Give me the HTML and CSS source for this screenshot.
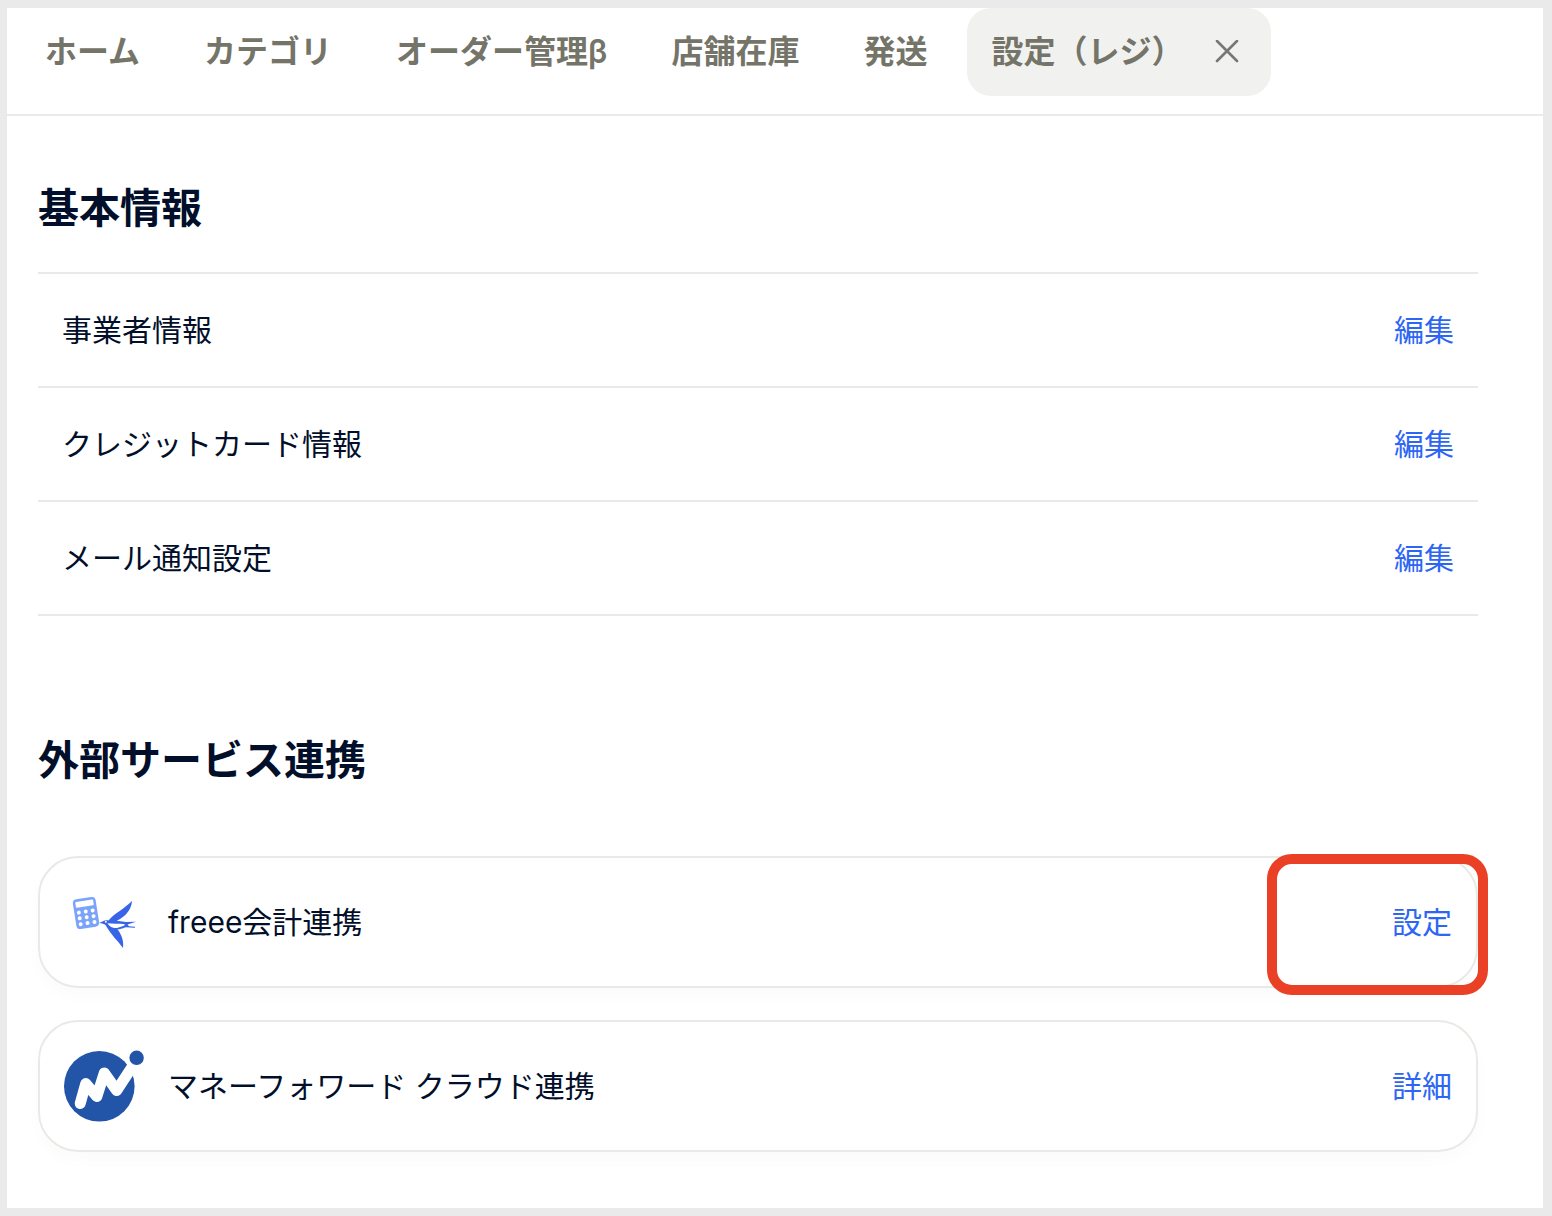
FILE: index.html
```
<!DOCTYPE html>
<html lang="ja">
<head>
  <meta charset="UTF-8" />
  <meta name="viewport" content="width=device-width, initial-scale=1.0" />
  <title>設定（レジ）</title>
  <link rel="stylesheet" href="styles.css">
</head>
<body>
  <div class="page">
    <nav class="tabs">
      <a class="tab" href="#home">ホーム</a>
      <a class="tab" href="#category">カテゴリ</a>
      <a class="tab" href="#orders">オーダー管理β</a>
      <a class="tab" href="#stock">店舗在庫</a>
      <a class="tab" href="#shipping">発送</a>
      <div class="tab active">
        <a href="#settings">設定（レジ）</a>
        <button class="close" type="button" aria-label="閉じる">
          <svg width="24" height="24" viewBox="0 0 24 24" fill="none" stroke="#777" stroke-width="2.6" stroke-linecap="round">
            <path d="M2 1L22 21M22 1L2 21" />
          </svg>
        </button>
      </div>
    </nav>

    <main>
      <section id="settings">
        <h2>基本情報</h2>
        <ul class="rows">
          <li><span>事業者情報</span><a href="#business">編集</a></li>
          <li><span>クレジットカード情報</span><a href="#card">編集</a></li>
          <li><span>メール通知設定</span><a href="#mail">編集</a></li>
        </ul>
      </section>

      <section class="services">
        <h2>外部サービス連携</h2>
        <div class="card marked">
          <svg class="logo" viewBox="0 0 80 80">
            <!-- calculator -->
            <g transform="rotate(-9 22 31)">
              <rect x="10.500" y="16" width="23" height="30" rx="4" fill="#7ba3fa" />
              <rect x="13" y="18.500" width="18" height="6" rx="1" fill="#fff" />
              <g fill="#fff">
                <circle cx="15" cy="29.500" r="2" /><circle cx="22" cy="29.500" r="2" /><circle cx="29" cy="29.500" r="2" />
                <circle cx="15" cy="35.300" r="2" /><circle cx="22" cy="35.300" r="2" /><circle cx="29" cy="35.300" r="2" />
                <circle cx="15" cy="41.200" r="2" /><circle cx="22" cy="41.200" r="2" /><circle cx="29" cy="41.200" r="2" />
              </g>
            </g>
            <!-- swallow -->
            <g fill="#3864e8">
              <path d="M35 41L39 39.300C41 38 43 38 44.500 38.400C51 31 60 27 68 19C67.500 28 61 35 52.700 38.700L62 40L72 39.700L63.500 42.500L65 44.300L71 44.800V45.700L61.500 45.200C58 46.500 56 47.300 53.500 47.300C57 52 60 58 59 66C54 59 47 53 41.500 43C40 42 38 41.300 35 41Z" />
              <path d="M43.300 41.300C46.500 45.500 49.500 46.500 53 45.900L60 43.700L61 42.200C54 41.500 49 41.800 43.300 41.300Z" fill="#fff" />
              <circle cx="41.800" cy="39.800" r="1" fill="#fff" />
            </g>
          </svg>
          <span class="name">freee会計連携</span>
          <a href="#freee">設定</a>
        </div>
        <div class="card">
          <svg class="logo" viewBox="0 0 80 80">
            <circle cx="35.300" cy="40.300" r="35.300" fill="#2254a8" />
            <path d="M16.200 57.500L21.800 37.500L32.800 50.500L40.300 27L52.700 44.500L70 18" fill="none" stroke="#fff" stroke-width="11" stroke-linecap="round" stroke-linejoin="round" />
            <circle cx="72.600" cy="11.800" r="10.500" fill="#fff" />
            <circle cx="72.600" cy="11.800" r="7.200" fill="#2254a8" />
          </svg>
          <span class="name">マネーフォワード クラウド連携</span>
          <a href="#moneyforward">詳細</a>
        </div>
      </section>
    </main>
  </div>
</body>
</html>
```
FILE: styles.css
```
* {
  box-sizing: border-box;
}
body {
  margin: 0;
  padding: 8px 9px 8px 7px;
  background: #eaeaea;
  color: #020f2a;
  font-family: Inter, "Noto Sans CJK JP", sans-serif;
  font-size: 30px;
  font-weight: 400;
  line-height: 48px;
}
a {
  color: #2d66f5;
  text-decoration: none;
}
.page {
  background: #fff;
}
.tabs {
  display: flex;
  gap: 16px;
  padding: 0 14px 18px;
  border-bottom: 2px solid #eaeaea;
  font-size: 32px;
  font-weight: 600;
  white-space: nowrap;
}
.tab {
  padding: 20px 24px;
  color: #747469;
}
.tab a {
  color: inherit;
}
.tab.active {
  display: flex;
  align-items: center;
  gap: 32px;
  padding-right: 32px;
  border-radius: 24px;
  background: #f1f1ef;
}
.close {
  display: flex;
  padding: 0;
  border: none;
  background: none;
  cursor: pointer;
}
main {
  padding: 64px 65px 56px 31px;
}
h2 {
  margin: 0;
  font-size: 41px;
  font-weight: 600;
  line-height: 56px;
}
.rows {
  margin: 36px 0 0;
  padding: 0;
  list-style: none;
  border-top: 2px solid #e9e9e6;
}
.rows li {
  display: flex;
  justify-content: space-between;
  padding: 32px 24px;
  border-bottom: 2px solid #e9e9e6;
}
.services {
  display: flex;
  flex-direction: column;
  gap: 32px;
  margin-top: 116px;
}
.services h2 {
  margin-bottom: 36px;
}
.card {
  position: relative;
  display: flex;
  align-items: center;
  gap: 24px;
  padding: 24px;
  border: 2px solid #e9e9e6;
  border-radius: 40px;
  box-shadow: 0 8px 16px rgba(0,0,0,0.02);
}
.logo {
  width: 80px;
  height: 80px;
}
.name {
  flex: 1;
}
/* red frame around the link of the card */
.marked::after {
  content: "";
  position: absolute;
  top: -4px;
  right: -12px;
  bottom: -9px;
  width: 201px;
  border: 10px solid #ea4025;
  border-radius: 25px;
  pointer-events: none;
}
```
